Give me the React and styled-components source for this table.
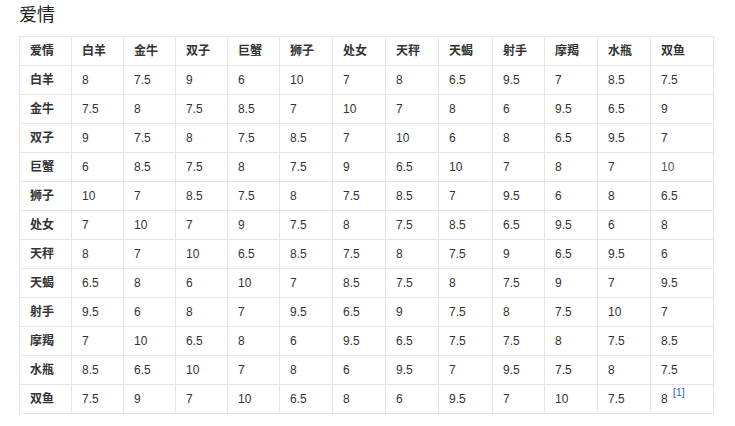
import React from "react"
import styled, { createGlobalStyle } from "styled-components"

const GlobalStyle = createGlobalStyle`
  body {
    margin: 0;
    background: #fff;
    font-family: Arial, "Liberation Sans", "Noto Sans CJK SC", sans-serif;
  }
`

const Page = styled.div`
  padding: 3px 19px 0;
`

const Title = styled.h2`
  margin: 0 0 9px;
  font-size: 18px;
  font-weight: normal;
  line-height: 24px;
  color: #222;
  font-family: "Liberation Sans", "Noto Sans CJK SC", sans-serif;
`

const Table = styled.table`
  border-collapse: collapse;
  table-layout: fixed;
  width: 695px;
  font-size: 12px;
  color: #333;
  font-family: "Liberation Sans", "Noto Sans CJK SC", sans-serif;
`

const Cell = styled.td`
  border: 1px solid #e6e6e6;
  height: 28px;
  padding: 0 0 0 10px;
  line-height: 18px;
  vertical-align: middle;
  font-weight: ${p => (p.$head ? "bold" : "normal")};
  color: ${p => (p.$muted ? "#555" : "#333")};
  white-space: nowrap;
`

const Ref = styled.sup`
  color: #3366cc;
  font-size: 11px;
  margin-left: 5px;
  position: relative;
  top: -7px;
  vertical-align: baseline;
`

const signs = ["白羊", "金牛", "双子", "巨蟹", "狮子", "处女", "天秤", "天蝎", "射手", "摩羯", "水瓶", "双鱼"]

const widths = [52, 52, 52, 52, 52, 53, 53, 53, 54, 52, 53, 53, 63]

const data = [
  ["8", "7.5", "9", "6", "10", "7", "8", "6.5", "9.5", "7", "8.5", "7.5"],
  ["7.5", "8", "7.5", "8.5", "7", "10", "7", "8", "6", "9.5", "6.5", "9"],
  ["9", "7.5", "8", "7.5", "8.5", "7", "10", "6", "8", "6.5", "9.5", "7"],
  ["6", "8.5", "7.5", "8", "7.5", "9", "6.5", "10", "7", "8", "7", "10"],
  ["10", "7", "8.5", "7.5", "8", "7.5", "8.5", "7", "9.5", "6", "8", "6.5"],
  ["7", "10", "7", "9", "7.5", "8", "7.5", "8.5", "6.5", "9.5", "6", "8"],
  ["8", "7", "10", "6.5", "8.5", "7.5", "8", "7.5", "9", "6.5", "9.5", "6"],
  ["6.5", "8", "6", "10", "7", "8.5", "7.5", "8", "7.5", "9", "7", "9.5"],
  ["9.5", "6", "8", "7", "9.5", "6.5", "9", "7.5", "8", "7.5", "10", "7"],
  ["7", "10", "6.5", "8", "6", "9.5", "6.5", "7.5", "7.5", "8", "7.5", "8.5"],
  ["8.5", "6.5", "10", "7", "8", "6", "9.5", "7", "9.5", "7.5", "8", "7.5"],
  ["7.5", "9", "7", "10", "6.5", "8", "6", "9.5", "7", "10", "7.5", "8"],
]

export default function App() {
  return (
    <>
      <GlobalStyle />
      <Page>
        <Title>爱情</Title>
        <Table>
          <colgroup>
            {widths.map((w, i) => (
              <col key={i} style={{ width: w }} />
            ))}
          </colgroup>
          <tbody>
            <tr>
              <Cell $head>爱情</Cell>
              {signs.map(s => (
                <Cell $head key={s}>{s}</Cell>
              ))}
            </tr>
            {data.map((row, r) => (
              <tr key={r}>
                <Cell $head>{signs[r]}</Cell>
                {row.map((v, c) => {
                  const last = r === 11 && c === 11
                  return (
                    <Cell key={c} $muted={r === 3 && c === 11}>
                      {v}
                      {last && <Ref>[1]</Ref>}
                    </Cell>
                  )
                })}
              </tr>
            ))}
          </tbody>
        </Table>
      </Page>
    </>
  )
}
